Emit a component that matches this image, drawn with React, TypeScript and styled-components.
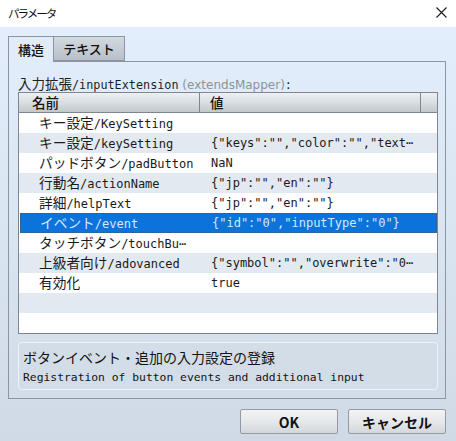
import React from 'react';
import styled, { createGlobalStyle } from 'styled-components';

const GlobalStyle = createGlobalStyle`
  html, body {
    margin: 0;
    padding: 0;
  }
  body {
    width: 456px;
    height: 441px;
    overflow: hidden;
    background: #ffffff;
  }
`;

// runs of kana / kanji get their own, wider face
const CJK_RUN = /([\u3000-\u30ff\u3400-\u9fff\uff00-\uffef]+)/;

const Wide = styled.span<{ $size: number }>`
  font-family: 'Noto Sans CJK JP', sans-serif;
  font-size: ${(p) => p.$size}px;
`;

const Mixed = ({ text, cjk = 13.7 }: { text: string; cjk?: number }) => (
  <>
    {text.split(CJK_RUN).map((part, i) =>
      i % 2 ? (
        <Wide key={i} $size={cjk}>
          {part}
        </Wide>
      ) : (
        part
      )
    )}
  </>
);

const rows = [
  { name: 'キー設定/KeySetting', value: '' },
  { name: 'キー設定/keySetting', value: '{"keys":"","color":"","text⋯' },
  { name: 'パッドボタン/padButton', value: 'NaN' },
  { name: '行動名/actionName', value: '{"jp":"","en":""}' },
  { name: '詳細/helpText', value: '{"jp":"","en":""}' },
  { name: 'イベント/event', value: '{"id":"0","inputType":"0"}', selected: true },
  { name: 'タッチボタン/touchBu⋯', value: '' },
  { name: '上級者向け/adovanced', value: '{"symbol":"","overwrite":"0⋯' },
  { name: '有効化', value: 'true' },
  { name: '', value: '' },
  { name: '', value: '' },
];

const App = () => {
  return (
    <>
      <GlobalStyle />
      <Window>
        <TitleBar>
          <Title>パラメータ</Title>
          <CloseButton>
            <svg width="11" height="11" viewBox="0 0 11 11">
              <path d="M0.5 0.5 L10.5 10.5 M10.5 0.5 L0.5 10.5" stroke="#1b1b1b" strokeWidth="1.1" />
            </svg>
          </CloseButton>
        </TitleBar>
        <Body>
          <TabRow>
            <Tab $active>構造</Tab>
            <Tab>テキスト</Tab>
          </TabRow>
          <Panel>
            <FieldLabel>
              <Mixed text="入力拡張/inputExtension" cjk={13.5} />
              <Hint> (extendsMapper)</Hint>:
            </FieldLabel>
            <Table>
              <HeaderRow>
                <HeaderCell $pad={13}>名前</HeaderCell>
                <HeaderCell $pad={10}>値</HeaderCell>
                <HeaderCell $pad={0} />
              </HeaderRow>
              {rows.map((r, i) => (
                <Row key={i} $alt={i % 2 === 1} $selected={!!r.selected}>
                  <NameCell>
                    <Mixed text={r.name} />
                  </NameCell>
                  <ValueCell>{r.value}</ValueCell>
                </Row>
              ))}
            </Table>
            <Description>
              <DescLine>
                <Mixed text="ボタンイベント・追加の入力設定の登録" cjk={14} />
              </DescLine>
              <DescLine>Registration of button events and additional input</DescLine>
            </Description>
          </Panel>
          <Footer>
            <DialogButton>OK</DialogButton>
            <DialogButton>キャンセル</DialogButton>
          </Footer>
        </Body>
      </Window>
    </>
  );
};

export default App;

const Window = styled.div`
  width: 456px;
  height: 441px;
  display: flex;
  flex-direction: column;
  font-family: 'DejaVu Sans Mono', 'Noto Sans CJK JP', monospace;
  color: #1a1a1a;
`;

const TitleBar = styled.div`
  height: 27px;
  flex: none;
  display: flex;
  align-items: center;
  justify-content: space-between;
  padding: 0 9px 0 8px;
  background: #ffffff;
`;

const Title = styled.div`
  font-family: 'Noto Sans CJK JP', sans-serif;
  font-size: 11.5px;
  letter-spacing: -2px;
  color: #111;
  margin-top: -1px;
`;

const CloseButton = styled.div`
  width: 11px;
  height: 11px;
  display: flex;
  margin-top: -2px;
`;

const Body = styled.div`
  flex: 1;
  display: flex;
  flex-direction: column;
  padding: 9px 10px 0 8px;
  background: linear-gradient(to bottom, #e3eefc 0%, #dae5f2 50%, #cfdae6 100%);
`;

const TabRow = styled.div`
  display: flex;
  height: 25px;
  position: relative;
  z-index: 1;
`;

const Tab = styled.div<{ $active?: boolean }>`
  box-sizing: border-box;
  width: ${(p) => (p.$active ? '46px' : '71px')};
  height: ${(p) => (p.$active ? '26px' : '25px')};
  display: flex;
  align-items: center;
  justify-content: center;
  border: 1px solid #8d96a0;
  border-bottom: ${(p) => (p.$active ? 'none' : '1px solid #8d96a0')};
  border-left: ${(p) => (p.$active ? '1px solid #8d96a0' : 'none')};
  background: ${(p) =>
    p.$active ? '#e2ecf9' : 'linear-gradient(to bottom, #d3d9e0 0%, #b7bfc8 100%)'};
  font-family: 'Noto Sans CJK JP', sans-serif;
  font-size: 13px;
  font-weight: 500;
  color: #111;
`;

const Panel = styled.div`
  box-sizing: border-box;
  height: 338px;
  border: 1px solid #8d96a0;
  padding: 13px 9px 8px 9px;
  display: flex;
  flex-direction: column;
`;

const FieldLabel = styled.div`
  height: 16px;
  line-height: 16px;
  margin-bottom: 1px;
  font-size: 11.8px;
  color: #1e1e1e;
  white-space: nowrap;
`;

const Hint = styled.span`
  font-family: 'DejaVu Sans', sans-serif;
  font-size: 12px;
  color: #8d939a;
`;

const Table = styled.div`
  box-sizing: border-box;
  width: 420px;
  height: 242px;
  overflow: hidden;
  border: 1px solid #7e8791;
  background: #ffffff;
`;

const HeaderRow = styled.div`
  display: grid;
  grid-template-columns: 181px 221px 1fr;
  height: 20px;
  box-sizing: border-box;
  border-bottom: 1px solid #7e8791;
  background: linear-gradient(to bottom, #eef0f2 0%, #dadee2 50%, #c3c8cd 100%);
`;

const HeaderCell = styled.div<{ $pad: number }>`
  padding-left: ${(p) => p.$pad}px;
  border-right: 1px solid #7e8791;
  font-family: 'Noto Sans CJK JP', sans-serif;
  font-size: 13.5px;
  font-weight: 500;
  line-height: 19px;
  color: #151515;
  &:last-child {
    border-right: none;
  }
`;

const Row = styled.div<{ $alt: boolean; $selected: boolean }>`
  box-sizing: border-box;
  display: grid;
  grid-template-columns: 181px 1fr;
  height: 20px;
  align-items: center;
  font-size: 12px;
  white-space: nowrap;
  background: ${(p) => (p.$selected ? '#0b73da' : p.$alt ? '#e3e9f1' : '#ffffff')};
  color: ${(p) => (p.$selected ? '#d4e9ff' : '#1a1a1a')};
  outline: ${(p) => (p.$selected ? '1px solid #2f639e' : 'none')};
  outline-offset: -1px;
  margin-left: ${(p) => (p.$selected ? '1px' : '0')};
`;

const NameCell = styled.div`
  padding-left: 20px;
  line-height: 20px;
  overflow: hidden;
`;

const ValueCell = styled.div`
  padding-left: 11px;
  line-height: 20px;
  overflow: hidden;
`;

const Description = styled.div`
  box-sizing: border-box;
  width: 420px;
  height: 48px;
  margin-top: 8px;
  padding: 5px 4px;
  border: 1px solid #eef3f9;
  border-radius: 4px;
  background: #d3dde8;
`;

const DescLine = styled.div`
  font-family: 'DejaVu Sans Mono', 'Noto Sans CJK JP', monospace;
  font-size: 11.35px;
  line-height: 18px;
  color: #141414;
  white-space: nowrap;
`;

const Footer = styled.div`
  display: flex;
  justify-content: flex-end;
  gap: 10px;
  margin-top: 10px;
`;

const DialogButton = styled.div`
  box-sizing: border-box;
  width: 98px;
  height: 25px;
  display: flex;
  align-items: center;
  justify-content: center;
  border: 1px solid #939ba4;
  border-radius: 2px;
  background: linear-gradient(to bottom, #f3f3f3 0%, #e6e8ea 50%, #d3d7db 100%);
  font-family: 'Noto Sans CJK JP', sans-serif;
  font-size: 14px;
  font-weight: 600;
  color: #111;
`;
